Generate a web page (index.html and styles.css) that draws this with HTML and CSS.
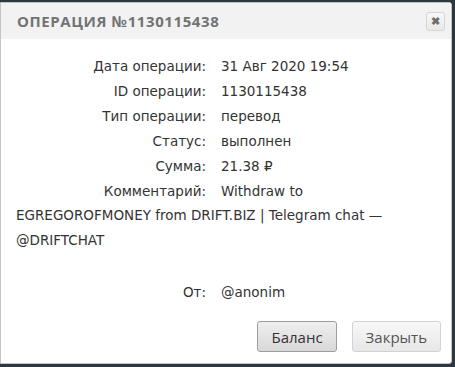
FILE: index.html
```html
<!DOCTYPE html>
<html>
<head>
    <title>Операция</title>
    <link rel="stylesheet" href="styles.css">
</head>
<body>
<div class="dialog">
    <div class="dialog-header">
        <span class="dialog-title">Операция №1130115438</span>
        <button class="close-btn" type="button">&#10006;</button>
    </div>
    <div class="dialog-body">
        <div class="row"><span class="label">Дата операции:</span>31 Авг 2020 19:54</div>
        <div class="row"><span class="label">ID операции:</span>1130115438</div>
        <div class="row"><span class="label">Тип операции:</span>перевод</div>
        <div class="row"><span class="label">Статус:</span>выполнен</div>
        <div class="row"><span class="label">Сумма:</span>21.38 ₽</div>
        <div class="row"><span class="label">Комментарий:</span>Withdraw to EGREGOROFMONEY from DRIFT.BIZ | Telegram chat — @DRIFTCHAT</div>
        <div class="row empty"></div>
        <div class="row"><span class="label">От:</span>@anonim</div>
    </div>
    <div class="dialog-footer">
        <button class="btn btn-active" type="button">Баланс</button>
        <button class="btn" type="button">Закрыть</button>
    </div>
</div>
</body>
</html>
```

FILE: styles.css
```css
body {
    margin: 0;
    padding: 2px 0 0 0;
    background: #2c3840;
    font-family: "DejaVu Sans", Arial, sans-serif;
}
.dialog {
    width: 450px;
    height: 360px;
    background: #fff;
    border: 1px solid #c4c4c4;
    border-radius: 0 3px 3px 0;
    display: flex;
    flex-direction: column;
}
.dialog-header {
    height: 36px;
    background: #f2f2f2;
    display: flex;
    align-items: center;
    justify-content: space-between;
    padding: 0 6px 0 16px;
}
.dialog-title {
    font-family: "Open Sans", sans-serif;
    font-weight: bold;
    font-size: 15px;
    letter-spacing: 0.6px;
    text-transform: uppercase;
    color: #737373;
}
.close-btn {
    width: 19px;
    height: 19px;
    padding: 0;
    border: 1px solid #d6d6d6;
    border-radius: 3px;
    background: linear-gradient(#f7f7f7, #e9e9e9);
    color: #6f6f6f;
    font-size: 11px;
    font-weight: bold;
    line-height: 17px;
    cursor: pointer;
}
.dialog-body {
    flex: 1;
    padding: 15px 15px 0 15px;
    font-size: 13.5px;
    line-height: 24.9px;
    color: #333;
}
.label {
    display: inline-block;
    width: 190px;
    text-align: right;
    margin-right: 15px;
}
.empty {
    height: 27px;
}
.dialog-footer {
    display: flex;
    justify-content: flex-end;
    gap: 15px;
    padding: 0 10px 11px 0;
}
.btn {
    height: 31px;
    padding: 0 13px;
    font-family: "Open Sans", sans-serif;
    font-size: 15px;
    color: #555;
    border: 1px solid #d2d2d2;
    border-radius: 3px;
    background: linear-gradient(#f8f8f8, #e7e7e7);
    cursor: pointer;
}
.btn-active {
    color: #333;
    border-color: #9e9e9e;
    background: linear-gradient(#efefef, #d8d8d8);
}
```
